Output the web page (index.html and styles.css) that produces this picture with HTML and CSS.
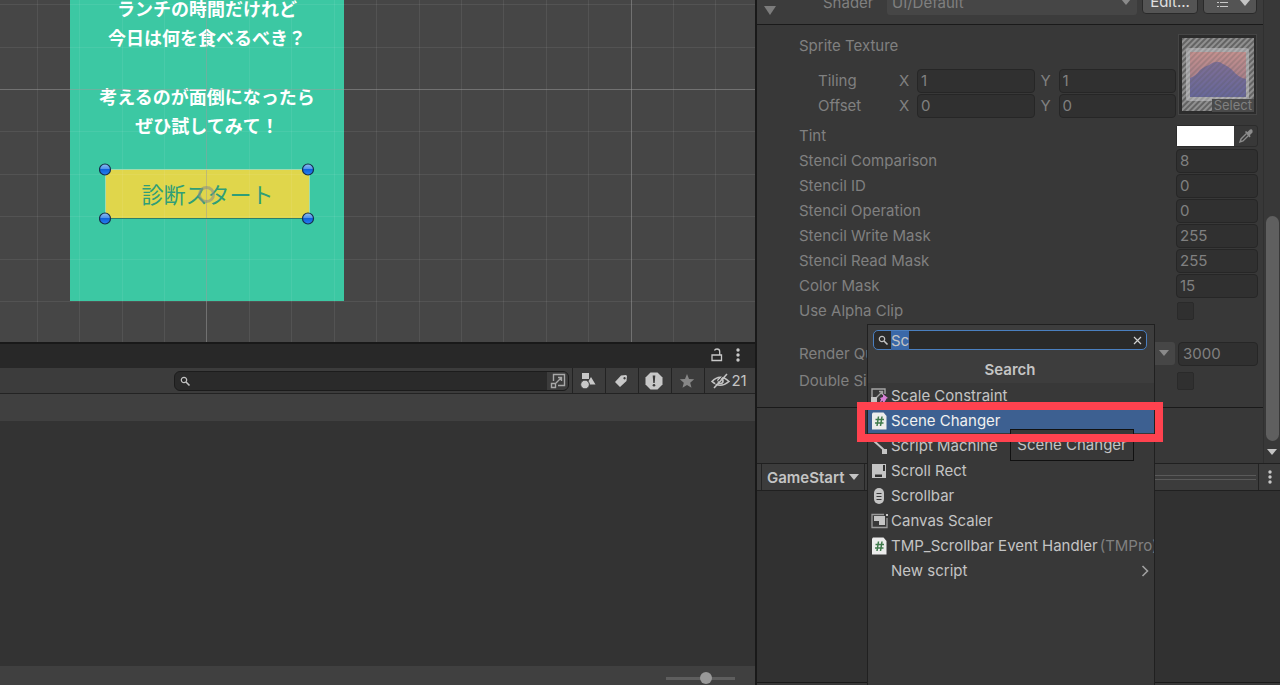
FILE: index.html
```html
<!DOCTYPE html>
<html lang="ja">

	<head>
		<meta charset="UTF-8">
		<title>GameStart</title>
		<link rel="stylesheet" href="styles.css">
	</head>

	<body>
		<div class="editor">
			<main class="left">
				<section class="scene">
					<div class="card">
						<p>ランチの時間だけれど<br>今日は何を食べるべき？</p>
						<p>考えるのが面倒になったら<br>ぜひ試してみて！</p>
					</div>
					<button type="button" class="start">診断スタート</button>
					<svg class="grid" width="100%" height="100%">
						<path class="minor" d="M37.5 0v342M79.5 0v342M122.5 0v342M164.5 0v342M249.5 0v342M291.5 0v342M334.5 0v342M376.5 0v342M419.5 0v342M461.5 0v342M503.5 0v342M546.5 0v342M588.5 0v342M673.5 0v342M715.5 0v342M0 4.5h3000M0 47.5h3000M0 131.5h3000M0 174.5h3000M0 216.5h3000M0 259.5h3000M0 301.5h3000" />
						<path class="major" d="M206.5 0v342M631.5 0v342M0 89.5h3000" />
					</svg>
					<svg class="handles" width="216" height="62" viewBox="0 0 216 62">
						<defs>
							<linearGradient id="ball" x1="0" y1="0" x2="0" y2="1">
								<stop offset="0.1" stop-color="#7fb4f0" />
								<stop offset="0.45" stop-color="#4d92ea" />
								<stop offset="0.5" stop-color="#0f62dc" />
								<stop offset="1" stop-color="#2a80f0" />
							</linearGradient>
						</defs>
						<path d="M6.5 55V6.5H210.5V55" fill="none" stroke="#9fdcb0" />
						<path d="M6.5 55.5H210.5" stroke="#2c7f6b" />
						<circle cx="107.5" cy="31.5" r="7" fill="none" stroke="#8a8f86" stroke-width="3" opacity="0.6" />
						<g fill="url(#ball)" stroke="#15304e" stroke-width="1.2">
							<circle cx="6" cy="6.5" r="5.5" />
							<circle cx="209" cy="6.5" r="5.5" />
							<circle cx="6" cy="55.5" r="5.5" />
							<circle cx="209" cy="55.5" r="5.5" />
						</g>
					</svg>
				</section>

				<section class="project">
					<div class="tabbar">
						<button type="button" aria-label="Lock">
							<svg width="12" height="14" viewBox="0 0 12 14" fill="none" stroke="#c8c8c8" stroke-width="1.3"><path d="M1 7h9.5v5.5H1zM3.5 2.5Q4 1 6 1q2.700 0 2.700 2.500V7" /></svg>
						</button>
						<button type="button" aria-label="Menu">
							<svg width="6" height="14" viewBox="0 0 6 14" fill="#c8c8c8"><circle cx="3" cy="2" r="1.7" /><circle cx="3" cy="7" r="1.7" /><circle cx="3" cy="12" r="1.7" /></svg>
						</button>
					</div>
					<div class="toolbar">
						<label class="find">
							<svg width="11" height="11" viewBox="0 0 11 11" fill="none" stroke="#c4c4c4"><circle cx="4" cy="4" r="2.7" stroke-width="1.2" /><path d="M6 6l3.5 3.5" stroke-width="1.6" /></svg>
							<input type="text" aria-label="Search assets">
							<span class="jump">
								<svg width="16" height="16" viewBox="0 0 16 16" fill="none" stroke="#a8a8a8" stroke-width="1.4"><path d="M3.5 8V1.5h11v11H8M1.5 10.5h4v4h-4zM6 10l5.5-5.5M8 4.5h3.5V8" /></svg>
							</span>
						</label>
						<button type="button" class="tool" aria-label="Type">
							<svg width="16" height="18" viewBox="0 0 16 18" fill="#c8c8c8"><path d="M2 1h7v6H2zM11 5l4.5 7.5H10L8.500 9z" /><circle cx="5" cy="12.5" r="4.3" stroke="#3c3c3c" stroke-width=".8" /></svg>
						</button>
						<button type="button" class="tool" aria-label="Label">
							<svg width="14" height="14" viewBox="0 0 14 14"><path fill="#c8c8c8" fill-rule="evenodd" d="M7 1.5L12 1l1 1-.5 5L6 13 1 8zM10.5 3a1.200 1.200 0 1 0 .1 0z" /></svg>
						</button>
						<button type="button" class="tool" aria-label="Import log">
							<svg width="18" height="18" viewBox="0 0 18 18"><path fill="#c8c8c8" d="M5.5.5h7l5 5v7l-5 5h-7l-5-5v-7z" /><path fill="#3c3c3c" d="M7.7 3.5h2.6L9.700 11H8.300z" /><circle cx="9" cy="13.3" r="1.3" fill="#3c3c3c" /></svg>
						</button>
						<button type="button" class="tool" aria-label="Favorite">
							<svg width="16" height="16" viewBox="0 0 16 16" fill="#868686"><path d="M8 1l2 4.900 5.200.4-4 3.400 1.300 5.100L8 12l-4.500 2.800 1.300-5.100-4-3.400L6 5.900z" /></svg>
						</button>
						<button type="button" class="tool count">
							<svg width="19" height="16" viewBox="0 0 19 16" fill="none" stroke="#c4c4c4" stroke-width="1.6"><path d="M1 8.5Q9 0 18 8.5 9 16 1 8.5zM16 1L3 15" /><circle cx="9.5" cy="8" r="2.5" /><path d="M14 1L1.500 14" stroke="#3c3c3c" stroke-width="1" /></svg>21
						</button>
					</div>
					<div class="crumbs"></div>
					<div class="files"></div>
					<div class="foot">
						<input type="range" class="zoom" min="0" max="100" value="60" aria-label="Icon size">
					</div>
				</section>
			</main>

			<aside class="inspector">
				<div class="scroller">
					<div class="content">
						<div class="shader">
							<span class="fold"></span>
							<label for="shader">Shader</label>
							<div class="drop">
								<select id="shader"><option>UI/Default</option></select>
							</div>
							<button type="button" class="edit">Edit...</button>
							<button type="button" class="preset" aria-label="Presets">
								<svg width="11" height="10" viewBox="0 0 11 10" fill="#c8c8c8"><path d="M0 1h2v1H0zM3 1h8v1H3zM0 4h2v1H0zM3 4h8v1H3zM0 8h2v1H0zM3 8h8v1H3z" /></svg>
								<span class="arrow light"></span>
							</button>
						</div>

						<div class="props">
							<div class="texture">
								<div class="vectors">
									<div class="row">Sprite Texture</div>
									<div class="vector">
										<span class="name">Tiling</span>
										<label for="tx">X</label><input type="text" id="tx" value="1">
										<label for="ty">Y</label><input type="text" id="ty" value="1">
									</div>
									<div class="vector">
										<span class="name">Offset</span>
										<label for="ox">X</label><input type="text" id="ox" value="0">
										<label for="oy">Y</label><input type="text" id="oy" value="0">
									</div>
								</div>
								<button type="button" class="thumb">
									<svg width="72" height="73" viewBox="0 0 72 73">
										<defs>
											<linearGradient id="sky" x1="0" y1="0" x2="0" y2="1">
												<stop offset="0" stop-color="#c4918f" />
												<stop offset="1" stop-color="#9a7688" />
											</linearGradient>
											<linearGradient id="hill" x1="0" y1="0" x2="0" y2="1">
												<stop offset="0" stop-color="#7f6f96" />
												<stop offset="1" stop-color="#67679a" />
											</linearGradient>
											<pattern id="hatch" width="4" height="4" patternUnits="userSpaceOnUse" patternTransform="rotate(45)">
												<path d="M1 0v4" stroke="#585858" stroke-width="1.6" />
											</pattern>
										</defs>
										<path fill="#909090" d="M0 0h72v73H0z" />
										<path fill="url(#hatch)" d="M0 0h72v73H0z" />
										<rect x="4" y="10" width="63" height="53" rx="3" fill="#aeaeb0" />
										<path fill="url(#sky)" d="M8 14h56v45H8z" />
										<path fill="url(#hill)" d="M8 40q6-2 10-8 5-4 9-5 8-6 14-1 7 3 12 9 5 5 11 6v18H8z" />
										<path fill="url(#hatch)" opacity=".3" d="M4 10h63v53H4z" />
									</svg>
									<span>Select</span>
								</button>
							</div>
							<div class="row">
								<label for="tint">Tint</label>
								<div class="color">
									<input type="color" id="tint" value="#ffffff">
									<svg width="16" height="16" viewBox="0 0 16 16"><path fill="none" stroke="#8c8c8c" stroke-width="1.4" d="M8.5 5.5L3 11l-1 3 3-1 5.5-5.5" /><path fill="#8c8c8c" d="M7 4l1-1 1.500 1L12 1.500q2-1 2.500 1T14 5l-2 2 .5 1.500-1 1z" /></svg>
								</div>
							</div>
							<div class="row"><label for="cmp">Stencil Comparison</label><input type="text" id="cmp" value="8"></div>
							<div class="row"><label for="sid">Stencil ID</label><input type="text" id="sid" value="0"></div>
							<div class="row"><label for="sop">Stencil Operation</label><input type="text" id="sop" value="0"></div>
							<div class="row"><label for="swm">Stencil Write Mask</label><input type="text" id="swm" value="255"></div>
							<div class="row"><label for="srm">Stencil Read Mask</label><input type="text" id="srm" value="255"></div>
							<div class="row"><label for="mask">Color Mask</label><input type="text" id="mask" value="15"></div>
							<div class="row"><label for="clip">Use Alpha Clip</label><span class="tick"><input type="checkbox" id="clip"></span></div>
							<div class="row queue">
								<label for="queue">Render Queue</label>
								<div class="drop"><select aria-label="Queue source"><option>From Shader</option></select></div>
								<input type="text" id="queue" value="3000">
							</div>
							<div class="row double"><label for="gi">Double Sided</label><span class="tick"><input type="checkbox" id="gi"></span></div>
						</div>
					</div>
					<div class="scrollbar">
						<div class="bar"></div>
						<span class="arrow light"></span>
					</div>
				</div>

				<div class="preview-head">
					<button type="button" class="asset">GameStart<span class="arrow light"></span></button>
					<span class="grip"></span>
					<button type="button" class="dots" aria-label="Preview menu">
						<svg width="6" height="14" viewBox="0 0 6 14" fill="#c8c8c8"><circle cx="3" cy="2" r="1.7" /><circle cx="3" cy="7" r="1.7" /><circle cx="3" cy="12" r="1.7" /></svg>
					</button>
				</div>
				<div class="preview"></div>

				<div class="menu">
					<div class="menu-top">
						<label class="menu-find">
							<svg width="11" height="11" viewBox="0 0 11 11" fill="none" stroke="#c4c4c4"><circle cx="4" cy="4" r="2.7" stroke-width="1.2" /><path d="M6 6l3.5 3.5" stroke-width="1.6" /></svg>
							<input type="text" id="query" value="Sc" aria-label="Search components">
							<svg width="9" height="9" viewBox="0 0 9 9" fill="none" stroke="#d0d0d0" stroke-width="1.2"><path d="M1 1l7 7M8 1L1 8" /></svg>
						</label>
						<h2>Search</h2>
					</div>
					<ul>
						<li><button type="button">
							<svg width="18" height="16" viewBox="0 0 18 16"><path fill="none" stroke="#a4a4a4" stroke-width="1.4" d="M1 9V1h13v5M5 10l6-6M8 3.5h3.5V7" /><path fill="#c4c4c4" d="M0 9h6v6H0z" /><path fill="#d77fd6" d="M12 6l5 4-1.500.5-1 2-2 3-1-3-3 3 1.500-4L9 10l3-1z" /></svg>
							Scale Constraint</button></li>
						<li><button type="button" class="on">
							<svg width="18" height="18" viewBox="0 0 18 18"><path fill="#ececec" d="M2 .5h10.5L15.500 4v13.5H1v-16z" /><path fill="none" stroke="#3f7a4c" stroke-width="1.5" d="M7.5 4.5L6 14M11 4.500L9.500 14M4.500 7.500h8.500M4 11h8.500" /></svg>
							Scene Changer</button></li>
						<li><button type="button">
							<svg width="18" height="16" viewBox="0 0 18 16"><path fill="#72d3bd" d="M0 0h5v4H0z" /><path fill="none" stroke="#c4c4c4" stroke-width="2" d="M3 3l10 9" /><path fill="#c4c4c4" d="M11 11h5v5h-5z" /></svg>
							Script Machine</button></li>
						<li><button type="button">
							<svg width="18" height="16" viewBox="0 0 18 16"><path fill="#c4c4c4" d="M1 1h14v14H1z" /><path fill="#303030" d="M12 2h2v6h-2zM4 11.500h7V14H4z" /></svg>
							Scroll Rect</button></li>
						<li><button type="button">
							<svg width="18" height="16" viewBox="0 0 18 16"><rect x="3" y="0" width="10" height="16" rx="5" fill="#c4c4c4" /><path stroke="#383838" stroke-width="1.2" d="M5.5 5.5h5M5.500 8.500h5M5.500 11.500h5" /></svg>
							Scrollbar</button></li>
						<li><button type="button">
							<svg width="18" height="16" viewBox="0 0 18 16"><path fill="none" stroke="#9a9a9a" stroke-width="1.3" d="M13 1.5H1v13h15V5" /><path fill="#c4c4c4" d="M3 3h11v9H8V8H3zM15 1h2v2h-2z" /></svg>
							Canvas Scaler</button></li>
						<li><button type="button">
							<svg width="18" height="18" viewBox="0 0 18 18"><path fill="#ececec" d="M2 .5h10.5L15.500 4v13.5H1v-16z" /><path fill="none" stroke="#3f7a4c" stroke-width="1.5" d="M7.5 4.5L6 14M11 4.500L9.500 14M4.500 7.500h8.500M4 11h8.500" /></svg>
							TMP_Scrollbar Event Handler<small>(TMPro)</small></button></li>
						<li><button type="button" class="new">New script
							<svg width="8" height="12" viewBox="0 0 8 12" fill="none" stroke="#a0a0a0" stroke-width="1.6"><path d="M1.5 1L6.500 6l-5 5" /></svg></button></li>
					</ul>
				</div>
				<div class="tip" role="tooltip">Scene Changer</div>
				<div class="mark"></div>
			</aside>
		</div>

		<script src="script.js"></script>
	</body>

</html>
```
FILE: styles.css
```css
* {
	margin: 0;
	padding: 0;
	box-sizing: border-box;
}

html,
body {
	width: 100%;
	height: 100%;
	overflow: hidden;
}

body,
button,
input,
select {
	font-family: Inter, "Noto Sans CJK JP", sans-serif;
	font-size: 15px;
	color: #c4c4c4;
}

button {
	border: 0;
	background: none;
}

svg {
	flex: none;
	display: block;
}

.editor {
	display: grid;
	grid-template-columns: minmax(0, 1fr) 525px;
	height: 100vh;
	background: #383838;
}

.left {
	display: flex;
	flex-direction: column;
	min-width: 0;
}

/* scene view */
.scene {
	position: relative;
	flex: 1;
	overflow: hidden;
	background: #464646;
}

.card {
	position: absolute;
	left: 70px;
	top: -20px;
	width: 274px;
	height: 321px;
	padding-top: 14px;
	background: #3cc8a3;
	color: #fff;
	font-family: "Noto Sans CJK JP", sans-serif;
	font-size: 18px;
	font-weight: 700;
	line-height: 29px;
	text-align: center;
}

.card p {
	margin-bottom: 30px;
}

.start {
	position: absolute;
	left: 106px;
	top: 170px;
	width: 203px;
	height: 48px;
	padding-bottom: 2px;
	background: #e0d64b;
	color: #2f9e78;
	font-family: "Noto Sans CJK JP", sans-serif;
	font-size: 22px;
}

.grid,
.handles {
	position: absolute;
	left: 0;
	top: 0;
	fill: none;
	pointer-events: none;
}

.handles {
	left: 99px;
	top: 163px;
}

.minor {
	stroke: #fff;
	stroke-opacity: 0.07;
}

.major {
	stroke: #9c9c9c;
	stroke-opacity: 0.5;
}

/* project window */
.project {
	display: flex;
	flex-direction: column;
	height: 343px;
	border-top: 2px solid #191919;
	background: #333;
}

.tabbar {
	display: flex;
	align-items: center;
	justify-content: flex-end;
	gap: 12px;
	height: 24px;
	padding: 0 14px 2px 0;
	background: #282828;
}

.toolbar {
	display: flex;
	height: 26px;
	border-bottom: 1px solid #232323;
	background: #3c3c3c;
}

.find {
	display: flex;
	flex: 1;
	align-items: center;
	margin: 3px 3px 2px 174px;
	padding-left: 5px;
	border: 1px solid #1c1c1c;
	border-radius: 6px;
	overflow: hidden;
	background: #2a2a2a;
}

.find input,
.menu-find input {
	flex: 1;
	min-width: 0;
	border: 0;
	outline: 0;
	background: none;
}

.jump {
	display: flex;
	align-items: center;
	justify-content: center;
	width: 21px;
	height: 100%;
	background: #3c3c3c;
}

.tool {
	display: flex;
	align-items: center;
	justify-content: center;
	width: 33px;
	padding-right: 2px;
	border-left: 1px solid #232323;
}

.tool.count {
	width: 51px;
	gap: 1px;
}

.crumbs {
	height: 27px;
	background: #404040;
}

.files {
	flex: 1;
}

.foot {
	display: flex;
	justify-content: flex-end;
	height: 19px;
	padding: 6px 20px 0 0;
	background: #404040;
}

.zoom {
	width: 69px;
	height: 12px;
	appearance: none;
	background: linear-gradient(#5e5e5e, #5e5e5e) center / 100% 3px no-repeat;
}

.zoom::-webkit-slider-thumb {
	appearance: none;
	width: 12px;
	height: 12px;
	border-radius: 50%;
	background: #999;
}

/* inspector */
.inspector {
	position: relative;
	display: flex;
	flex-direction: column;
	min-width: 0;
	border-left: 2px solid #191919;
	overflow: hidden;
}

.scroller {
	display: flex;
	height: 463px;
	color: #808080;
}

.content {
	flex: 1;
	min-width: 0;
}

.arrow,
.fold {
	border: 5px solid transparent;
	border-top: 6px solid #7c7c7c;
	border-bottom: 0;
}

.arrow.light {
	border-top-color: #c4c4c4;
}

.shader {
	display: flex;
	align-items: flex-start;
	height: 34px;
	margin-top: -9px;
	padding: 0 6px 0 7px;
	border-bottom: 1px solid #1a1a1a;
	background: #3c3c3c;
	line-height: 23px;
}

.fold {
	align-self: flex-end;
	margin-bottom: 9px;
	border-width: 9px 6px 0;
}

.shader label {
	width: 64px;
	margin-left: 47px;
}

.drop {
	position: relative;
	flex: 1;
	height: 23px;
}

.drop::after {
	content: "";
	position: absolute;
	right: 6px;
	top: 8px;
	border: 5px solid transparent;
	border-top: 6px solid #8a8a8a;
	border-bottom: 0;
}

.drop select {
	width: 100%;
	height: 100%;
	padding: 0 0 2px 5px;
	appearance: none;
	border: 0;
	border-radius: 3px;
	background: #464646;
	color: #808080;
}

.edit,
.preset {
	width: 56px;
	height: 23px;
	margin-left: 5px;
	padding-bottom: 2px;
	border: 1px solid #2a2a2a;
	border-radius: 4px;
	background: #545454;
	color: #e0e0e0;
}

.preset {
	display: flex;
	align-items: center;
	justify-content: space-between;
	width: 54px;
	padding: 0 6px 0 13px;
}

.props {
	padding: 8px 5px 14px 42px;
	border-bottom: 1px solid #1a1a1a;
}

.row {
	display: flex;
	align-items: center;
	justify-content: space-between;
	height: 25px;
}

.row input[type="text"],
.vector input {
	width: 82px;
	height: 24px;
	padding-left: 3px;
	border: 1px solid #262626;
	border-radius: 4px;
	background: #303030;
	color: #808080;
}

.texture {
	display: flex;
	justify-content: space-between;
	margin-bottom: 5px;
}

.vectors {
	flex: 1;
}

.vectors > .row {
	margin-bottom: 10px;
}

.vector {
	display: flex;
	align-items: center;
	height: 25px;
	padding-left: 19px;
}

.vector .name {
	width: 81px;
}

.vector label {
	width: 18px;
}

.vector input {
	flex: 1;
	width: 0;
	min-width: 0;
}

.vector input + label {
	width: 18px;
	margin-left: 6px;
}

.thumb {
	position: relative;
	width: 79px;
	height: 81px;
	margin: 1px 1px 0 2px;
	padding: 3px;
	border: 1px solid #454545;
	background: #2c2c2c;
}

.thumb span {
	position: absolute;
	right: 2px;
	bottom: 2px;
	padding: 0 2px;
	background: #4a4a4a;
	color: #808080;
	font-size: 13px;
	line-height: 13px;
}

.color {
	display: flex;
	align-items: center;
	justify-content: space-between;
	width: 82px;
	height: 22px;
	padding-right: 3px;
	border: 1px solid #2c2c2c;
	border-radius: 3px;
}

.color input {
	width: 57px;
	height: 20px;
	border: 0;
	background: #fff;
}

.color input::-webkit-color-swatch-wrapper {
	padding: 0;
}

.color input::-webkit-color-swatch {
	border: 0;
}

.tick {
	display: flex;
	width: 81px;
}

.tick input {
	width: 17px;
	height: 18px;
	appearance: none;
	border: 1px solid #2a2a2a;
	border-radius: 2px;
	background: #303030;
}

.queue {
	margin: 18px 0 2px;
}

.queue .drop {
	margin: 0 3px 0 40px;
}

.row #queue {
	width: 80px;
	padding-left: 4px;
}

.double label {
	white-space: nowrap;
}

.scrollbar {
	display: flex;
	flex-direction: column;
	align-items: center;
	justify-content: flex-end;
	width: 17px;
	padding-bottom: 8px;
	border-left: 1px solid #303030;
}

.bar {
	width: 13px;
	height: 225px;
	margin-bottom: 8px;
	border-radius: 7px;
	background: #5f5f5f;
}

.preview-head {
	display: flex;
	align-items: center;
	height: 28px;
	border: 1px solid #202020;
	border-width: 1px 0;
	background: #3c3c3c;
}

.asset {
	display: flex;
	align-items: center;
	gap: 5px;
	height: 100%;
	margin-left: 4px;
	padding: 0 5px;
	border: 1px solid #232323;
	border-width: 0 1px;
	font-weight: 600;
}

.grip {
	flex: 1;
	height: 5px;
	margin: 0 2px;
	border: 1px solid #5a5a5a;
	border-width: 1px 0;
}

.dots {
	display: flex;
	align-items: center;
	justify-content: center;
	width: 22px;
	height: 100%;
	border-left: 1px solid #232323;
}

.preview {
	flex: 1;
	margin-bottom: 2px;
	border-bottom: 1px solid #191919;
	background: #313131;
}

/* add component menu */
.menu {
	position: absolute;
	top: 324px;
	right: 125px;
	bottom: 0;
	width: 288px;
	border: 1px solid #202020;
	border-bottom: 0;
	background: #383838;
}

.menu-top {
	height: 58px;
	padding: 5px 7px 0 5px;
	background: #3d3d3d;
}

.menu-find {
	display: flex;
	align-items: center;
	height: 20px;
	padding: 0 4px;
	border: 1px solid #4a7fc0;
	border-radius: 5px;
	background: #2a2a2a;
}

.menu-find input {
	margin-left: 2px;
}

.menu-find input::selection {
	background: #3a68a8;
	color: #c4c4c4;
}

.menu h2 {
	font-size: 15px;
	font-weight: 600;
	line-height: 40px;
	text-align: center;
}

.menu li {
	list-style: none;
}

.menu li button {
	display: flex;
	align-items: center;
	gap: 2px;
	width: 100%;
	height: 25px;
	padding-left: 3px;
	overflow: hidden;
	white-space: nowrap;
}

.menu li .on {
	background: #3d6091;
	color: #f0f0f0;
}

.menu small {
	color: #808080;
	font-size: 15px;
}

.menu li .new {
	justify-content: space-between;
	padding: 0 5px 0 23px;
}

.tip {
	position: absolute;
	top: 429px;
	right: 146px;
	width: 124px;
	height: 32px;
	border: 1px solid #111;
	background: #383838;
	line-height: 30px;
	text-align: center;
}

.mark {
	position: absolute;
	top: 402px;
	right: 117px;
	width: 306px;
	height: 40px;
	border: 8px solid #ff424f;
	pointer-events: none;
}
```
FILE: script.js
```js
var query = document.getElementById("query");
query.focus();
query.select();
```
